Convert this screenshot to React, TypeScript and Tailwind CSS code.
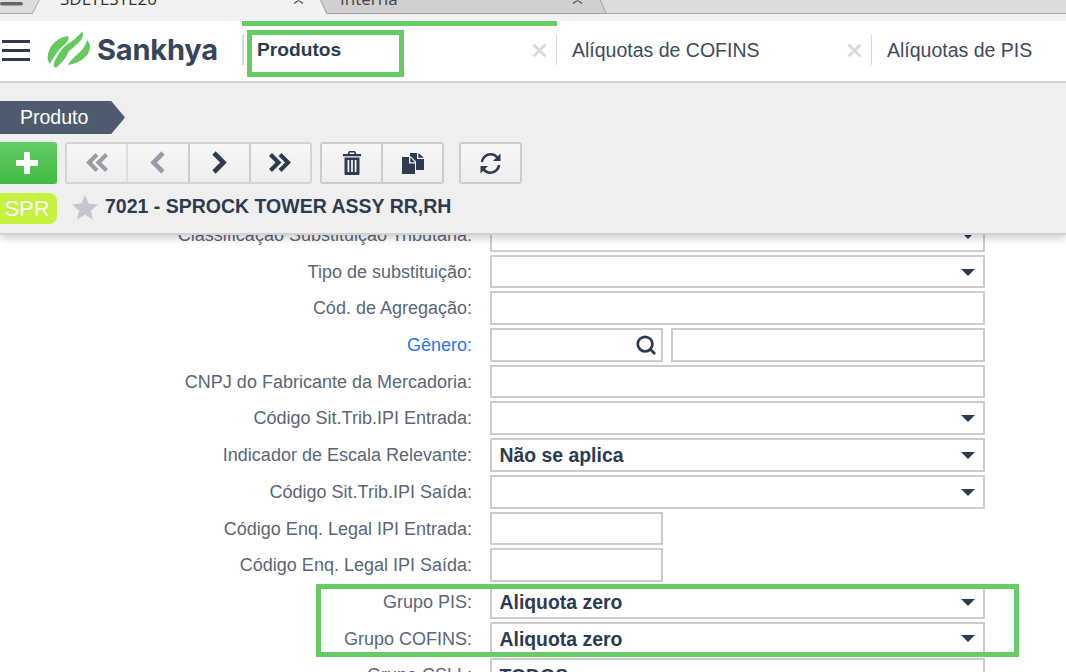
import React from "react";
import { Search } from "lucide-react";

const Chevron = ({ dbl, left, color }: { dbl?: boolean; left?: boolean; color: string }) => (
  <svg width="24" height="24" viewBox="0 0 24 24" fill="none" stroke={color} strokeWidth={dbl ? "4.2" : "4.6"}>
    <g transform={left ? "translate(24,0) scale(-1,1)" : undefined}>
      {dbl ? (
        <>
          <path d="M2.500 3.500 L10.500 11.500 L2.500 19.500" />
          <path d="M12 3.500 L20 11.500 L12 19.500" />
        </>
      ) : (
        <path d="M7 2 L16.500 11.500 L7 21" />
      )}
    </g>
  </svg>
);

const Trash = () => (
  <svg width="18" height="24" viewBox="0 0 18 24" fill="#2d3b50">
    <path fillRule="evenodd" d="M6 0h6l1.500 3H18v2.200H0V3h4.500zM7 1.400 6.300 3h5.400L11 1.400z" />
    <path fillRule="evenodd" d="M1.500 6.500h15V23a1 1 0 0 1-1 1h-13a1 1 0 0 1-1-1zM4.500 9v12h1.800V9zm3.600 0v12h1.800V9zm3.600 0v12h1.800V9z" />
  </svg>
);

const Copy = () => (
  <svg width="22" height="21" viewBox="0 0 22 21" fill="#2d3b50">
    <path d="M8 0h7v6h7v11h-8V8.500L9 3.500H8z" />
    <path d="M16.300 0 22 4.800h-5.700z" />
    <path d="M0 4h7v6.500h6V21H0z" />
    <path d="M8.300 4.300 13 9.200H8.300z" />
  </svg>
);

const Refresh = () => (
  <svg width="23" height="23" viewBox="0 0 23 23" fill="none">
    <path d="M2.800 10 C3.500 5.500 7.300 2.300 11.500 2.300 C14.500 2.300 17 3.600 18.500 6" stroke="#2d3b50" strokeWidth="2.500" />
    <path d="M20.200 13 C19.500 17.500 15.700 20.700 11.500 20.700 C8.500 20.700 6 19.400 4.500 17" stroke="#2d3b50" strokeWidth="2.500" />
    <path d="M21.500 1.500 V9 H14z" fill="#2d3b50" />
    <path d="M1.500 21.500 V14 H9z" fill="#2d3b50" />
  </svg>
);

const Logo = () => (
  <svg width="44" height="37" viewBox="0 0 44 37" fill="#66c95e">
    <path d="M21 4 C12 5 3 12 1 22 C0 26 1 30 3 32 C6 26 10 20 14 16 C18 12 23 9 21 4Z" />
    <path d="M36 0 C37 5 33 10 28 14 C23 18 21 20 20 23 C18 28 12 33 9 36 C6 35 6 31 9 27 C11 23 13 19 17 15 C21 11 26 9 29 6 C31 4 33 1 36 0Z" />
    <path d="M40 8 C44 12 44 18 40 23 C35 29 28 32 21 33 C23 28 29 24 33 20 C37 16 39 12 40 8Z" />
  </svg>
);

const X = () => (
  <svg width="15" height="15" viewBox="0 0 15 15" stroke="#d7dade" strokeWidth="3" className="shrink-0 -mt-[1px]">
    <path d="M1.500 1.500 L13.500 13.500 M13.500 1.500 L1.500 13.500" />
  </svg>
);

const Caret = () => (
  <span className="absolute right-[8px] top-1/2 -mt-[3px] w-0 h-0 border-l-[7px] border-r-[7px] border-t-[7px] border-l-transparent border-r-transparent border-t-[#2d3b50]" />
);

type Row = { label: string; kind: "select" | "text" | "search" | "short"; value?: string; blue?: boolean };
const rows: Row[] = [
  { label: "Classificação Substituição Tributaria:", kind: "select" },
  { label: "Tipo de substituição:", kind: "select" },
  { label: "Cód. de Agregação:", kind: "text" },
  { label: "Gênero:", kind: "search", blue: true },
  { label: "CNPJ do Fabricante da Mercadoria:", kind: "text" },
  { label: "Código Sit.Trib.IPI Entrada:", kind: "select" },
  { label: "Indicador de Escala Relevante:", kind: "select", value: "Não se aplica" },
  { label: "Código Sit.Trib.IPI Saída:", kind: "select" },
  { label: "Código Enq. Legal IPI Entrada:", kind: "short" },
  { label: "Código Enq. Legal IPI Saída:", kind: "short" },
  { label: "Grupo PIS:", kind: "select", value: "Aliquota zero" },
  { label: "Grupo COFINS:", kind: "select", value: "Aliquota zero" },
  { label: "Grupo CSLL:", kind: "select", value: "TODOS" },
];

const box = "border-2 border-[#cccccc] bg-white h-full";

const Field = ({ r }: { r: Row }) => {
  if (r.kind === "search")
    return (
      <div className="flex h-full gap-[8px]">
        <div className={`${box} w-[173px] relative`}>
          <Search className="absolute right-[4px] top-[4px]" size={22} strokeWidth={3} color="#2d3b50" />
        </div>
        <div className={`${box} w-[314px]`} />
      </div>
    );
  if (r.kind === "short") return <div className={`${box} w-[173px]`} />;
  return (
    <div className={`${box} w-[495px] relative flex items-center pl-[7.500px] pt-[2px] text-[19.400px] font-bold text-[#2d3b50]`}>
      {r.value}
      {r.kind === "select" && <Caret />}
    </div>
  );
};

const Btn = ({ children, sep }: { children: React.ReactNode; sep?: string }) => (
  <div className={`flex-1 flex items-center justify-center bg-gradient-to-b from-[#f7f7f7] to-[#eeeeee] ${sep ?? ""}`}>
    {children}
  </div>
);

export default function App() {
  return (
    <div className="w-[1066px] h-[672px] overflow-hidden relative bg-white font-['Liberation_Sans',Arial,sans-serif]">
      {/* browser tabs */}
      <div className="h-[21px] bg-[#f2f2f2] relative overflow-hidden">
        <svg className="absolute left-0 top-0" width="1066" height="21" viewBox="0 0 1066 21">
          <rect x="0" y="0" width="1066" height="13" fill="#dcdcdc" />
          <rect x="0" y="13" width="1066" height="1" fill="#a8a8a8" />
          <rect x="0" y="2" width="23" height="3.500" rx="1.700" fill="#666666" />
          <path d="M320 -1 L327 13.500 H606 L600 -1Z" fill="#d0d0d0" stroke="#a0a0a0" />
          <path d="M32 14 L40 -1 H320 L327 14Z" fill="#f2f2f2" />
          <path d="M32 14 L40 -1 M320 -1 L327 14" stroke="#a8a8a8" fill="none" />
          <path d="M294 -3 L303 3.500 M303 -3 L294 3.500" stroke="#555555" strokeWidth="1.300" />
          <path d="M573 -3 L582 3.500 M582 -3 L573 3.500" stroke="#555555" strokeWidth="1.300" />
        </svg>
        <span className="absolute left-[60px] -top-[12px] text-[17px] leading-[22px] text-[#333333] font-['Open_Sans',sans-serif]">SDLTESTE20</span>
        <span className="absolute left-[340px] -top-[12px] text-[17px] leading-[22px] text-[#444444] font-['Open_Sans',sans-serif]">Interna</span>
      </div>

      {/* app header */}
      <div className="h-[62px] bg-white border-b-2 border-[#cfcfcf] flex items-center relative z-20">
        <div className="w-[28px] ml-[2px] flex flex-col gap-[6px] -mt-[2px]">
          <span className="h-[3px] bg-[#2d3b50]" />
          <span className="h-[3px] bg-[#2d3b50]" />
          <span className="h-[3px] bg-[#2d3b50]" />
        </div>
        <div className="ml-[17px] -mt-[1px] flex items-center">
          <Logo />
        </div>
        <span className="ml-[6px] w-[145px] text-[29px] leading-none font-bold tracking-[-0.2px] text-[#36455a] font-['Inter',sans-serif] -mt-[3px]">Sankhya</span>
        <span className="h-[30px] w-[2px] bg-[#d5d9e0] -mt-[2px] shrink-0" />
        <span className="ml-[13px] w-[275px] text-[19.200px] font-bold text-[#2d3b50] -mt-[1px]">Produtos</span>
        <X />
        <span className="ml-[9px] h-[30px] w-[1px] bg-[#d5d9e0] -mt-[2px] shrink-0" />
        <span className="ml-[15px] w-[275px] text-[19.500px] text-[#3d4b60] -mt-[1px]">Alíquotas de COFINS</span>
        <X />
        <span className="ml-[9px] h-[30px] w-[1px] bg-[#d5d9e0] -mt-[2px] shrink-0" />
        <span className="ml-[15px] text-[19.500px] whitespace-nowrap text-[#3d4b60] -mt-[1px]">Alíquotas de PIS</span>
      </div>

      {/* panel */}
      <div className="h-[152px] bg-[#efefef] border-b-2 border-[#d2d2d2] shadow-[0_3px_8px_rgba(0,0,0,0.2)] relative z-10 pt-[18px]">
        <div className="h-[33px] w-[125px] bg-[#4e5b6f] [clip-path:polygon(0_0,89%_0,100%_50%,89%_100%,0_100%)] text-white text-[19.500px] flex items-center pl-[20px]">Produto</div>
        <div className="mt-[8px] h-[42px] flex">
          <div className="w-[57px] rounded-r-[3px] bg-gradient-to-b from-[#64cb68] to-[#3fbb3f] flex items-center justify-center pr-[3px]">
            <svg width="22" height="22" viewBox="0 0 22 22" fill="white"><path d="M8 0h6v8h8v6h-8v8H8v-8H0V8h8z" /></svg>
          </div>
          <div className="ml-[8px] w-[247px] flex border-2 border-[#d4d4d4] rounded-[3px] overflow-hidden">
            <Btn sep="border-r-2 border-[#dddddd]"><Chevron dbl left color="#979da6" /></Btn>
            <Btn sep="border-r-2 border-[#cccccc]"><Chevron left color="#979da6" /></Btn>
            <Btn sep="border-r-2 border-[#cccccc]"><Chevron color="#2d3b50" /></Btn>
            <Btn><Chevron dbl color="#2d3b50" /></Btn>
          </div>
          <div className="ml-[8px] w-[124px] flex border-2 border-[#cccccc] rounded-[3px] overflow-hidden">
            <Btn sep="border-r-2 border-[#cccccc]"><Trash /></Btn>
            <Btn><Copy /></Btn>
          </div>
          <div className="ml-[15px] w-[63px] flex border-2 border-[#cccccc] rounded-[3px] overflow-hidden">
            <Btn><Refresh /></Btn>
          </div>
        </div>
        <div className="mt-[9px] h-[31px] flex items-center">
          <div className="w-[57px] h-full rounded-r-[8px] bg-[#c3f23f] text-white text-[22px] flex items-center justify-center pr-[3px] pb-[1px]">SPR</div>
          <svg className="ml-[15px] -mt-[3px]" width="26" height="25" viewBox="0 0 26 25" fill="#c3c8d0"><path d="M13 0 L16.700 8.500 L26 9.400 L19 15.500 L21 24.500 L13 19.800 L5 24.500 L7 15.500 L0 9.400 L9.300 8.500Z" /></svg>
          <span className="ml-[7px] -mt-[3px] text-[19.500px] font-bold text-[#2d3b50] whitespace-nowrap">7021 - SPROCK TOWER ASSY RR,RH</span>
        </div>
      </div>

      {/* form */}
      <div className="relative z-0 -mt-[17px] flex flex-col gap-[3px]">
        {rows.map((r) => (
          <div key={r.label} className="h-[33.700px] flex items-stretch">
            <label className={`w-[472px] text-right text-[18px] leading-[35px] whitespace-nowrap ${r.blue ? "text-[#1f78f0]" : "text-[#5a6678]"}`}>{r.label}</label>
            <div className="ml-[18px]"><Field r={r} /></div>
          </div>
        ))}
      </div>

      {/* highlight annotations */}
      <div className="absolute left-[242px] top-[21px] w-[315px] h-[5px] bg-[#66cc66] z-30" />
      <div className="absolute left-[247px] top-[30px] w-[157px] h-[47px] border-[5px] border-[#66cc66] z-30" />
      <div className="absolute left-[316px] top-[584px] w-[703px] h-[73px] border-[5px] border-[#66cc66] z-30" />
    </div>
  );
}
